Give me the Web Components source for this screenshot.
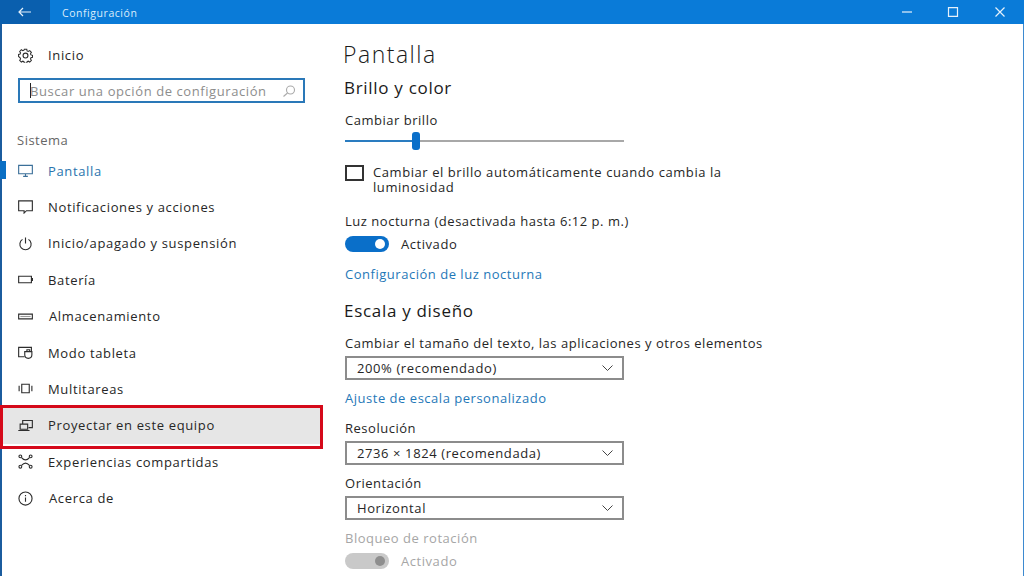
<!DOCTYPE html>
<html lang="es">
<head>
<meta charset="utf-8">
<title>Configuración</title>
<style>
html, body { margin: 0; height: 100%; background: #fff; overflow: hidden; }
body { font-family: "Open Sans", "Liberation Sans", sans-serif; }
</style>
</head>
<body>
<app-window>
  <title-bar slot="top">Configuración</title-bar>
  <nav-pane slot="left">
    <nav-item class="home" icon="gear">Inicio</nav-item>
    <search-box placeholder="Buscar una opción de configuración"></search-box>
    <nav-group>Sistema</nav-group>
    <nav-item icon="monitor" active>Pantalla</nav-item>
    <nav-item icon="note">Notificaciones y acciones</nav-item>
    <nav-item icon="power">Inicio/apagado y suspensión</nav-item>
    <nav-item icon="battery">Batería</nav-item>
    <nav-item icon="storage" nudge>Almacenamiento</nav-item>
    <nav-item icon="tablet">Modo tableta</nav-item>
    <nav-item icon="multi">Multitareas</nav-item>
    <nav-item icon="project" marked>Proyectar en este equipo</nav-item>
    <nav-item icon="shared">Experiencias compartidas</nav-item>
    <nav-item icon="info" nudge>Acerca de</nav-item>
  </nav-pane>
  <display-page slot="main"></display-page>
</app-window>

<script>
const icons = {
  gear: `<circle cx="8" cy="8" r="2.6"/><path d="M6.6 1.2h2.800l.4 1.900 1.300.6 1.700-1 1.900 2-1 1.600.5 1.300 1.800.5v2.300l-1.800.5-.5 1.300 1 1.600-1.900 2-1.700-1-1.300.6-.4 1.900H6.600l-.4-1.900-1.300-.6-1.700 1-1.900-2 1-1.600-.5-1.300L0 9.400V7.100l1.800-.5.5-1.300-1-1.600 1.900-2 1.700 1 1.300-.6z" transform="translate(.6 .3) scale(.93)"/>`,
  monitor: `<path d="M.7 2.500h14.600v9H.7zM5.500 14.300h5M8 11.500v2.800"/>`,
  note: `<path d="M.7 2h14.600v10.500H9L6.500 15v-2.500H.7z"/>`,
  power: `<path d="M8 1.500V8M4.800 3.600a6 6 0 1 0 6.400 0"/>`,
  battery: `<path d="M.7 4.500h13.600v7H.7zM15.500 6.500v3"/>`,
  storage: `<path d="M.7 5.500h14.600v5H.7z"/><path d="M2.500 8h11" stroke="#999"/>`,
  tablet: `<path d="M7 12.500H.7v-10h13.600v4"/><path d="M7.200 7v3.500a3.800 3.800 0 0 0 7.600 0V7z"/><path d="M9.500 7V5h3v2"/>`,
  multi: `<path d="M4 3.500h8v9H4zM1.200 5v6M14.800 5v6"/>`,
  project: `<path d="M5 6V2.700h10.300v7.600h-4M2.300 6.500h8v5.500h-8zM.3 13.300h12"/>`,
  shared: `<circle cx="2.500" cy="2.500" r="1.500"/><circle cx="13.500" cy="2.500" r="1.500"/><circle cx="2.500" cy="13.500" r="1.500"/><circle cx="13.500" cy="13.500" r="1.500"/><path d="M3.800 3.800Q8 8.800 12.200 3.800M3.800 12.200Q8 7.200 12.200 12.200"/>`,
  info: `<circle cx="8" cy="8" r="7"/><path d="M8 7v4.500M8 4.300v1.400"/>`
};

const hostFont = `font-family: "Open Sans", "Liberation Sans", sans-serif;`;

class AppWindow extends HTMLElement {
  constructor() {
    super();
    this.attachShadow({ mode: "open" });
    this.shadowRoot.innerHTML = `
<style>
:host { display: flex; flex-direction: column; width: 1024px; height: 576px; box-sizing: border-box; border-left: 2px solid #1b5c9e; border-right: 1px solid #3d8ad0; color: #1a1a1a; ${hostFont} }
.body { flex: 1; display: flex; min-height: 0; }
</style>
<slot name="top"></slot>
<div class="body">
  <slot name="left"></slot>
  <slot name="main"></slot>
</div>`;
  }
}

class TitleBar extends HTMLElement {
  constructor() {
    super();
    this.attachShadow({ mode: "open" });
    this.shadowRoot.innerHTML = `
<style>
:host { display: flex; align-items: center; height: 24px; margin-left: -2px; margin-right: -1px; background: #0a7bd8; color: #dcecfa; font-size: 10.5px; letter-spacing: .55px; flex: none; }
.back { width: 50px; align-self: stretch; background: #0a5fae; display: flex; align-items: center; justify-content: center; }
.name { flex: 1; padding: 1px 0 0 12px; }
.ctl { width: 46px; align-self: stretch; display: flex; align-items: center; justify-content: center; }
svg { fill: none; stroke: #e6f1fb; stroke-width: 1.2; display: block; }
.end { width: 48px; }
</style>
<div class="back"><svg width="14" height="10" viewBox="0 0 14 10"><path d="M13 5H1M5 1 1 5l4 4"/></svg></div>
<div class="name"><slot></slot></div>
<div class="ctl"><svg width="12" height="10" viewBox="0 0 12 10"><path d="M1 5h10"/></svg></div>
<div class="ctl"><svg width="12" height="10" viewBox="0 0 12 10"><path d="M1.500.7h9v8.600h-9z"/></svg></div>
<div class="ctl end"><svg width="12" height="10" viewBox="0 0 12 10"><path d="M1.500.5l9 9M10.500.5l-9 9"/></svg></div>`;
  }
}

class NavPane extends HTMLElement {
  constructor() {
    super();
    this.attachShadow({ mode: "open" });
    this.shadowRoot.innerHTML = `
<style>
:host { display: flex; flex-direction: column; width: 320px; flex: none; padding-top: 13px; box-sizing: border-box; }
</style>
<slot></slot>`;
  }
}

class NavItem extends HTMLElement {
  constructor() {
    super();
    this.attachShadow({ mode: "open" });
    const name = this.getAttribute("icon");
    this.shadowRoot.innerHTML = `
<style>
:host { display: flex; align-items: center; position: relative; height: 36.4px; flex: none; margin-left: -2px; font-size: 13px; letter-spacing: .65px; color: #262626; }
.ic { width: 15px; height: 15px; margin: 0 15px 0 18px; flex: none; }
svg { display: block; width: 15px; height: 15px; fill: none; stroke: #2e2e2e; stroke-width: 1.2; }
:host([active]) { color: #2a74ae; }
:host([active]) .bar { position: absolute; left: 0; top: 9px; width: 6px; height: 18px; background: #0a6fc4; }
:host([active]) svg { stroke: #3b6f99; }
:host([nudge]) .txt { margin-left: 1px; }
:host([marked]) { background: #e6e6e6; }
:host([marked]) .box { position: absolute; left: 0; right: -1px; top: -2px; bottom: -5px; border: 3px solid #d5091a; }
</style>
<div class="bar"></div>
<div class="ic"><svg viewBox="0 0 16 16">${icons[name]}</svg></div>
<div class="txt"><slot></slot></div>
<div class="box"></div>`;
  }
}

class SearchBox extends HTMLElement {
  constructor() {
    super();
    this.attachShadow({ mode: "open" });
    this.shadowRoot.innerHTML = `
<style>
:host { display: flex; align-items: center; box-sizing: border-box; width: 287px; height: 25px; margin: 5px 0 0 16px; border: 2px solid #2a78b8; padding: 0 7px 0 10px; font-size: 13px; letter-spacing: .58px; color: #8d8d8d; flex: none; }
.caret { width: 1px; height: 15px; background: #222; margin-right: -1px; }
.ph { flex: 1; white-space: nowrap; }
svg { display: block; fill: none; stroke: #aaa; stroke-width: 1.1; }
</style>
<div class="caret"></div>
<div class="ph">${this.getAttribute("placeholder")}</div>
<svg width="14" height="12" viewBox="0 0 14 12"><circle cx="8.500" cy="5" r="4"/><path d="M5.500 8 1.500 11.500"/></svg>`;
  }
}

class NavGroup extends HTMLElement {
  constructor() {
    super();
    this.attachShadow({ mode: "open" });
    this.shadowRoot.innerHTML = `
<style>
:host { display: block; margin: 28px 0 0 15px; height: 21px; font-size: 13px; letter-spacing: .5px; color: #666; flex: none; }
</style>
<slot></slot>`;
  }
}

class DropDown extends HTMLElement {
  constructor() {
    super();
    this.attachShadow({ mode: "open" });
    this.shadowRoot.innerHTML = `
<style>
:host { display: flex; align-items: center; box-sizing: border-box; width: 279px; height: 24px; border: 2px solid #8c8c8c; padding: 0 9px 0 10px; font-size: 13px; letter-spacing: .6px; color: #262626; }
.v { flex: 1; }
svg { display: block; fill: none; stroke: #444; stroke-width: 1; }
</style>
<div class="v"><slot></slot></div>
<svg width="11" height="6" viewBox="0 0 11 6"><path d="M.5.5 5.500 5.500l5-5"/></svg>`;
  }
}

class ToggleSwitch extends HTMLElement {
  constructor() {
    super();
    this.attachShadow({ mode: "open" });
    this.shadowRoot.innerHTML = `
<style>
:host { display: flex; align-items: center; gap: 12px; font-size: 13px; letter-spacing: .55px; color: #262626; height: 16px; }
.track { width: 44px; height: 16px; border-radius: 8px; background: #0a6fc9; display: flex; align-items: center; justify-content: flex-end; padding-right: 4px; box-sizing: border-box; }
.knob { width: 10px; height: 10px; border-radius: 50%; background: #fff; }
:host([disabled]) { color: #a6a6a6; }
:host([disabled]) .track { background: #c9c9c9; }
:host([disabled]) .knob { background: #8e8e8e; }
</style>
<div class="track"><div class="knob"></div></div>
<slot></slot>`;
  }
}

class BrightnessSlider extends HTMLElement {
  constructor() {
    super();
    this.attachShadow({ mode: "open" });
    this.shadowRoot.innerHTML = `
<style>
:host { display: flex; align-items: center; width: 279px; height: 20px; }
.on { width: 67px; height: 2px; background: #2a7cc0; }
.thumb { width: 8px; height: 18px; border-radius: 3px; background: #0a6fc9; flex: none; }
.off { flex: 1; height: 2px; background: #a8a8a8; }
</style>
<div class="on"></div><div class="thumb"></div><div class="off"></div>`;
  }
}

class CheckRow extends HTMLElement {
  constructor() {
    super();
    this.attachShadow({ mode: "open" });
    this.shadowRoot.innerHTML = `
<style>
:host { display: flex; align-items: flex-start; gap: 9px; width: 390px; font-size: 13px; letter-spacing: .57px; line-height: 15px; color: #262626; }
.box { width: 19px; height: 16px; box-sizing: border-box; border: 2px solid #333; flex: none; }
</style>
<div class="box"></div>
<div><slot></slot></div>`;
  }
}

class DisplayPage extends HTMLElement {
  constructor() {
    super();
    this.attachShadow({ mode: "open" });
    this.shadowRoot.innerHTML = `
<style>
:host { display: flex; flex-direction: column; flex: 1; padding: 16px 0 0 22px; font-size: 13px; letter-spacing: .52px; color: #262626; box-sizing: border-box; min-width: 0; }
h1 { margin: 0 0 0 -1px; font: 300 23px/28px "Open Sans", "Liberation Sans", sans-serif; letter-spacing: 1.5px; color: #1a1a1a; }
h2 { margin: 0; font: 400 17px/20px "Open Sans", "Liberation Sans", sans-serif; letter-spacing: .7px; color: #1a1a1a; }
p { margin: 0; line-height: 16px; padding-left: 1px; }
a { color: #1f78b8; padding-left: 1px; line-height: 16px; }
.disabled { color: #a6a6a6; }
.in { margin-left: 1px; }
</style>
<h1>Pantalla</h1>
<h2 style="margin-top:10px">Brillo y color</h2>
<p style="margin-top:14px">Cambiar brillo</p>
<brightness-slider class="in" style="margin-top:3px"></brightness-slider>
<check-row class="in" style="margin-top:14px">Cambiar el brillo automáticamente cuando cambia la luminosidad</check-row>
<p style="margin-top:18px">Luz nocturna (desactivada hasta 6:12 p. m.)</p>
<toggle-switch class="in" style="margin-top:7px">Activado</toggle-switch>
<a style="margin-top:14px">Configuración de luz nocturna</a>
<h2 style="margin-top:19px">Escala y diseño</h2>
<p style="margin-top:14px">Cambiar el tamaño del texto, las aplicaciones y otros elementos</p>
<drop-down class="in" style="margin-top:5px">200% (recomendado)</drop-down>
<a style="margin-top:10px">Ajuste de escala personalizado</a>
<p style="margin-top:14px">Resolución</p>
<drop-down class="in" style="margin-top:5px">2736 × 1824 (recomendada)</drop-down>
<p style="margin-top:10px">Orientación</p>
<drop-down class="in" style="margin-top:5px">Horizontal</drop-down>
<p class="disabled" style="margin-top:10px">Bloqueo de rotación</p>
<toggle-switch class="in" disabled style="margin-top:7px">Activado</toggle-switch>`;
  }
}

customElements.define("app-window", AppWindow);
customElements.define("title-bar", TitleBar);
customElements.define("nav-pane", NavPane);
customElements.define("nav-item", NavItem);
customElements.define("search-box", SearchBox);
customElements.define("nav-group", NavGroup);
customElements.define("drop-down", DropDown);
customElements.define("toggle-switch", ToggleSwitch);
customElements.define("brightness-slider", BrightnessSlider);
customElements.define("check-row", CheckRow);
customElements.define("display-page", DisplayPage);
</script>
</body>
</html>
